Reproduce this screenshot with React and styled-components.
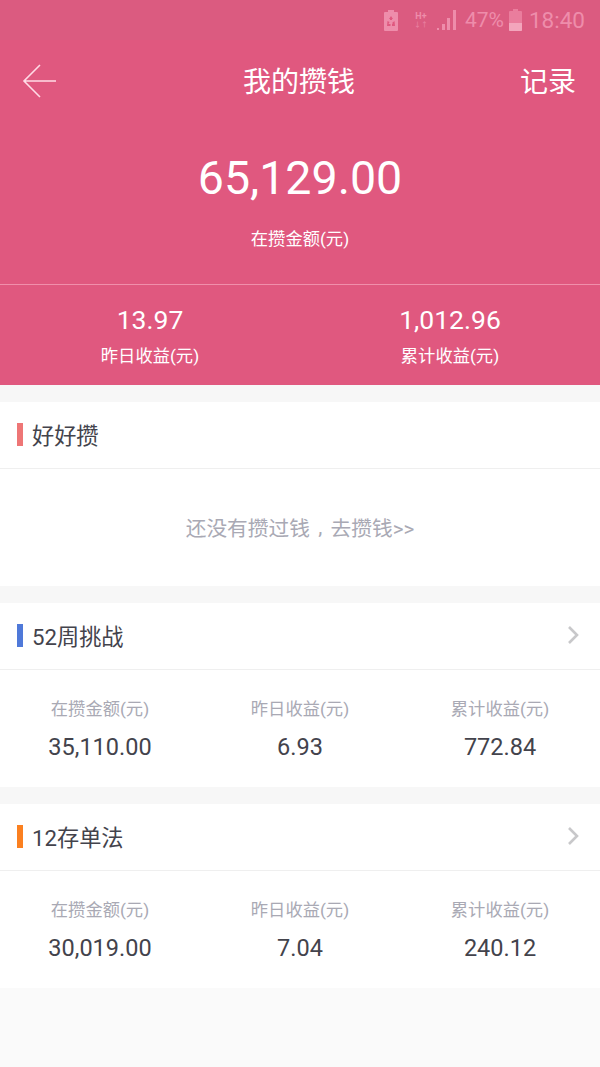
import React from 'react'
import styled, { createGlobalStyle } from 'styled-components'

const GlobalStyle = createGlobalStyle`
  html, body {
    margin: 0;
    padding: 0;
    background: #fafafa;
  }
  * {
    box-sizing: border-box;
  }
`

const FONT = `Roboto, "Noto Sans CJK SC", sans-serif`

const PLANS = [
  {
    title: '52周挑战',
    color: '#4f79d9',
    stats: ['35,110.00', '6.93', '772.84'],
  },
  {
    title: '12存单法',
    color: '#fb8020',
    stats: ['30,019.00', '7.04', '240.12'],
  },
]

const LABELS = ['在攒金额(元)', '昨日收益(元)', '累计收益(元)']

export default function App() {
  return (
    <Page>
      <GlobalStyle />
      <Hero>
        <StatusBar>
          <svg width="14" height="21" viewBox="0 0 14 21">
            <path d="M4 0h6v2h3a1 1 0 0 1 1 1v17a1 1 0 0 1-1 1H1a1 1 0 0 1-1-1V3a1 1 0 0 1 1-1h3z" fill="#ee8dab" />
            <path d="M7 6l2 3H8v1H6V9H5zM3.500 11l2 1-1 2h2v2H3zM10.500 11l.5 5H8v-2h1l-1-1z" fill="#e0587f" />
          </svg>
          <NetBadge>
            <span>H+</span>
            <small>↓↑</small>
          </NetBadge>
          <svg width="20" height="20" viewBox="0 0 20 20">
            <path d="M0 18h2v2H0zM5 14h3v6H5zM10 8h3v12h-3zM16 0h3v20h-3z" fill="#ee8dab" />
          </svg>
          <PercentText>47%</PercentText>
          <svg width="13" height="22" viewBox="0 0 13 22">
            <path d="M4 0h5v2h3a1 1 0 0 1 1 1v18a1 1 0 0 1-1 1H1a1 1 0 0 1-1-1V3a1 1 0 0 1 1-1h3z" fill="#ea7d9d" />
            <path d="M0 14h13v7a1 1 0 0 1-1 1H1a1 1 0 0 1-1-1z" fill="#f3a5bc" />
          </svg>
          <ClockText>18:40</ClockText>
        </StatusBar>
        <NavBar>
          <BackIcon width="36" height="36" viewBox="0 0 36 36">
            <path d="M34 18H2M18 2L2 18l16 16" fill="none" stroke="#ffdbe6" strokeWidth="1.6" />
          </BackIcon>
          <NavTitle>我的攒钱</NavTitle>
          <NavAction>记录</NavAction>
        </NavBar>
        <Total>
          <TotalValue>65,129.00</TotalValue>
          <TotalLabel>在攒金额(元)</TotalLabel>
        </Total>
        <HeroStats>
          <HeroStat>
            <HeroStatValue>13.97</HeroStatValue>
            <HeroStatLabel>昨日收益(元)</HeroStatLabel>
          </HeroStat>
          <HeroStat>
            <HeroStatValue>1,012.96</HeroStatValue>
            <HeroStatLabel>累计收益(元)</HeroStatLabel>
          </HeroStat>
        </HeroStats>
      </Hero>

      <CardList>
        <Card>
          <CardHeader>
            <Marker $color="#ee7676" />
            <CardTitle>好好攒</CardTitle>
          </CardHeader>
          <EmptyBody>还没有攒过钱<CenteredComma>,</CenteredComma>去攒钱&gt;&gt;</EmptyBody>
        </Card>

        {PLANS.map(plan => (
          <Card key={plan.title}>
            <CardHeader>
              <Marker $color={plan.color} />
              <CardTitle>{plan.title}</CardTitle>
              <Chevron width="12" height="20" viewBox="0 0 12 20">
                <path d="M1 2l8 8-8 8" fill="none" stroke="#c8c8ca" strokeWidth="2.6" />
              </Chevron>
            </CardHeader>
            <StatsRow>
              {plan.stats.map((value, i) => (
                <Stat key={LABELS[i]}>
                  <StatLabel>{LABELS[i]}</StatLabel>
                  <StatValue>{value}</StatValue>
                </Stat>
              ))}
            </StatsRow>
          </Card>
        ))}
      </CardList>
    </Page>
  )
}

const Page = styled.div`
  width: 600px;
  min-height: 1067px;
  background: #fafafa;
  font-family: ${FONT};
`

const Hero = styled.header`
  background: #e0587f;
  color: #fff;
`

const StatusBar = styled.div`
  height: 40px;
  padding-right: 15px;
  display: flex;
  align-items: center;
  justify-content: flex-end;
  background: #db5b80;
`

const PercentText = styled.span`
  margin: 0 5px 0 8px;
  font-size: 21px;
  color: #ee8dab;
`

const ClockText = styled.span`
  margin-left: 7px;
  font-size: 22.500px;
  color: #ee8dab;
`

const NetBadge = styled.span`
  width: 14px;
  margin: 0 9px 0 16px;
  display: flex;
  flex-direction: column;
  align-items: center;
  font-size: 9px;
  line-height: 10px;
  font-weight: 700;
  color: #ee8dab;

  small {
    font-size: 7px;
    line-height: 8px;
    opacity: 0.7;
  }
`

const NavBar = styled.nav`
  height: 82px;
  padding: 0 24px 0 22px;
  display: grid;
  grid-template-columns: 1fr auto 1fr;
  align-items: center;
`

const BackIcon = styled.svg`
  display: block;
`

const NavTitle = styled.h1`
  margin: 0 0 2px;
  font-size: 28px;
  font-weight: 400;
`

const NavAction = styled.span`
  justify-self: end;
  font-size: 28px;
  margin-bottom: 2px;
`

const Total = styled.div`
  height: 163px;
  padding-top: 24px;
  display: flex;
  flex-direction: column;
  align-items: center;
  border-bottom: 1px solid #f08fab;
`

const TotalValue = styled.div`
  font-size: 46.500px;
  line-height: 64px;
`

const TotalLabel = styled.div`
  margin-top: 17px;
  font-size: 17.300px;
  line-height: 24px;
`

const HeroStats = styled.div`
  height: 100px;
  display: grid;
  grid-template-columns: 1fr 1fr;
`

const HeroStat = styled.div`
  padding-top: 18px;
  display: flex;
  flex-direction: column;
  align-items: center;
`

const HeroStatValue = styled.div`
  font-size: 26.500px;
  line-height: 34px;
`

const HeroStatLabel = styled.div`
  margin-top: 7px;
  font-size: 17.300px;
  line-height: 24px;
`

const CardList = styled.div`
  background: #f7f7f7;
`

const Card = styled.section`
  padding-top: 17px;
  height: 201px;
`

const CardHeader = styled.div`
  height: 67px;
  padding: 0 20px 0 17px;
  display: flex;
  align-items: center;
  background: #fff;
  border-bottom: 1px solid #efefef;
`

const Marker = styled.i`
  width: 6px;
  height: 23px;
  margin-bottom: 1px;
  background: ${p => p.$color};
`

const CardTitle = styled.h2`
  margin: 0 0 2px 9px;
  flex: 1;
  font-size: 22.200px;
  font-weight: 400;
  color: #43434c;
`

const Chevron = styled.svg`
  display: block;
  margin-bottom: 2px;
`

const EmptyBody = styled.div`
  height: 117px;
  padding-bottom: 2px;
  display: flex;
  align-items: center;
  justify-content: center;
  background: #fff;
  font-size: 20.700px;
  color: #a9a9b4;
`

const CenteredComma = styled.span`
  width: 1em;
  text-align: center;
`

const StatsRow = styled.div`
  height: 117px;
  display: grid;
  grid-template-columns: repeat(3, 1fr);
  background: #fff;
`

const Stat = styled.div`
  padding-top: 27px;
  display: flex;
  flex-direction: column;
  align-items: center;
`

const StatLabel = styled.div`
  font-size: 17.300px;
  line-height: 24px;
  color: #a9a9b4;
`

const StatValue = styled.div`
  margin-top: 11px;
  font-size: 23.500px;
  line-height: 30px;
  color: #43434c;
`
